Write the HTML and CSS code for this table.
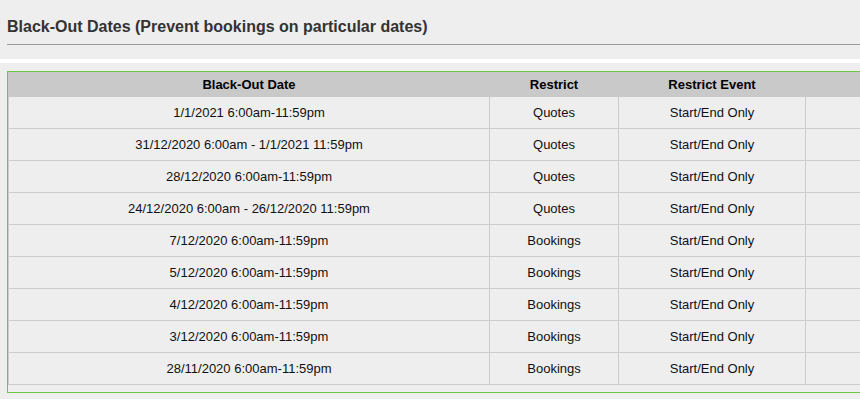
FILE: index.html
```html
<!DOCTYPE html>
<html lang="en">
<head>
<meta charset="utf-8">
<title>Black-Out Dates</title>
<link rel="stylesheet" href="styles.css">
</head>
<body>
<div class="page">
  <h2 class="title">Black-Out Dates (Prevent bookings on particular dates)</h2>
  <div class="divider"></div>
  <div class="panel">
    <div class="grid">
      <div class="row head">
        <div class="cell">Black-Out Date</div>
        <div class="cell">Restrict</div>
        <div class="cell">Restrict Event</div>
        <div class="cell"></div>
      </div>
      <div class="row"><div class="cell">1/1/2021 6:00am-11:59pm</div><div class="cell">Quotes</div><div class="cell">Start/End Only</div><div class="cell"></div></div>
      <div class="row"><div class="cell">31/12/2020 6:00am - 1/1/2021 11:59pm</div><div class="cell">Quotes</div><div class="cell">Start/End Only</div><div class="cell"></div></div>
      <div class="row"><div class="cell">28/12/2020 6:00am-11:59pm</div><div class="cell">Quotes</div><div class="cell">Start/End Only</div><div class="cell"></div></div>
      <div class="row"><div class="cell">24/12/2020 6:00am - 26/12/2020 11:59pm</div><div class="cell">Quotes</div><div class="cell">Start/End Only</div><div class="cell"></div></div>
      <div class="row"><div class="cell">7/12/2020 6:00am-11:59pm</div><div class="cell">Bookings</div><div class="cell">Start/End Only</div><div class="cell"></div></div>
      <div class="row"><div class="cell">5/12/2020 6:00am-11:59pm</div><div class="cell">Bookings</div><div class="cell">Start/End Only</div><div class="cell"></div></div>
      <div class="row"><div class="cell">4/12/2020 6:00am-11:59pm</div><div class="cell">Bookings</div><div class="cell">Start/End Only</div><div class="cell"></div></div>
      <div class="row"><div class="cell">3/12/2020 6:00am-11:59pm</div><div class="cell">Bookings</div><div class="cell">Start/End Only</div><div class="cell"></div></div>
      <div class="row"><div class="cell">28/11/2020 6:00am-11:59pm</div><div class="cell">Bookings</div><div class="cell">Start/End Only</div><div class="cell"></div></div>
    </div>
  </div>
</div>
</body>
</html>
```

FILE: styles.css
```css
html, body {
  margin: 0;
  padding: 0;
  background: #eeeeee;
  overflow: hidden;
}
body {
  font-family: "Liberation Sans", Arial, sans-serif;
  color: #111111;
}
.title {
  margin: 18px 0 0 7px;
  padding: 0 0 8px 0;
  font-size: 16px;
  line-height: 18px;
  font-weight: bold;
  color: #333333;
  border-bottom: 1px solid #9a9a9a;
}
.divider {
  margin-top: 14px;
  height: 4px;
  background: #ffffff;
}
.panel {
  margin: 8px 0 0 7px;
  border: 1px solid #6cc53e;
  border-right: none;
  padding-bottom: 7px;
}
.row {
  display: grid;
  grid-template-columns: 482px 129px 187px 1fr;
}
.cell {
  box-sizing: border-box;
  height: 32px;
  display: flex;
  align-items: center;
  justify-content: center;
  font-size: 13px;
  line-height: 15px;
  border-right: 1px solid #cccccc;
  border-bottom: 1px solid #cccccc;
  white-space: nowrap;
}
.cell:first-child {
  border-left: 1px solid #cccccc;
}
.cell:last-child {
  border-right: none;
}
.head {
  background: #c9c9c9;
}
.head .cell {
  height: 25px;
  font-weight: bold;
  color: #000000;
  border-color: transparent;
}
```
